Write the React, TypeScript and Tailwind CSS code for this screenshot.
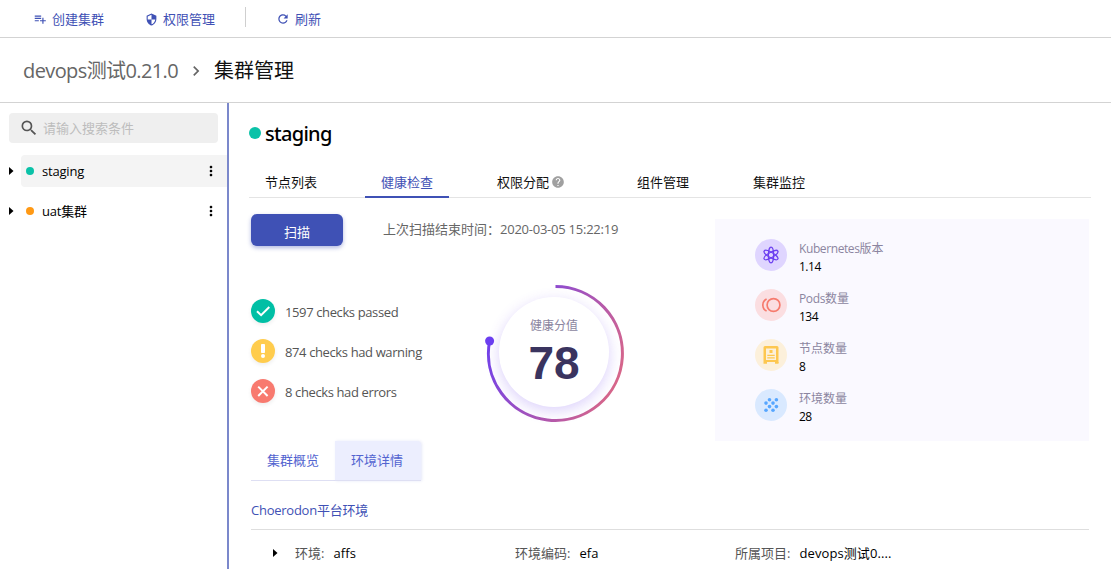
import React from "react";
import {
  MdPlaylistAdd,
  MdSecurity,
  MdRefresh,
  MdSearch,
  MdMoreVert,
  MdHelp,
  MdNavigateNext,
} from "react-icons/md";

function Caret() {
  return (
    <svg width="5" height="8" viewBox="0 0 5 8" className="shrink-0 fill-black">
      <path d="M0 0L4.5 4L0 8Z" />
    </svg>
  );
}

function Toolbar() {
  return (
    <div className="flex h-[38px] items-center border-b border-[#d3d3d3] pt-px text-[#3f51b5]">
      <button className="ml-[33px] flex w-[71px] items-center gap-1.5">
        <MdPlaylistAdd size={14} className="-mr-px shrink-0" />
        <span className="whitespace-nowrap leading-5">创建集群</span>
      </button>
      <button className="ml-10 flex w-[71px] items-center gap-[5px]">
        <MdSecurity size={13} className="ml-px shrink-0" />
        <span className="whitespace-nowrap leading-5">权限管理</span>
      </button>
      <div className="mb-1 ml-[30px] h-5 w-px bg-[#cfcfcf]" />
      <button className="ml-[30px] flex items-center gap-[5px]">
        <MdRefresh size={14} className="shrink-0" />
        <span className="whitespace-nowrap leading-5">刷新</span>
      </button>
    </div>
  );
}

function Breadcrumb() {
  return (
    <div className="flex h-[65px] items-center border-b border-[#d3d3d3] pl-[23px] pt-px text-[20px]">
      <span className="w-[155px] whitespace-nowrap tracking-[-0.6px] text-[#666]">devops测试0.21.0</span>
      <MdNavigateNext size={20} className="mx-2 text-[#666]" />
      <span className="text-[#111]">集群管理</span>
    </div>
  );
}

function TreeRow({ name, dot, active }: { name: string; dot: string; active?: boolean }) {
  return (
    <div className="flex h-8 items-center pl-[9px]">
      <Caret />
      <div className={`ml-[7px] flex h-8 flex-1 items-center pl-[5px] ${active ? "rounded-l-sm bg-[#f4f4f4]" : ""}`}>
        <span className={`size-2 rounded-full ${dot}`} />
        <span className="ml-2 flex-1 tracking-[-0.2px] text-black">{name}</span>
        <MdMoreVert size={16} className="mr-2 text-black" />
      </div>
    </div>
  );
}

function Sidebar() {
  return (
    <aside className="w-[229px] shrink-0 border-r-2 border-[#7b88cb] pt-2.5">
      <div className="ml-[9px] flex h-[30px] w-[209px] items-center rounded-sm bg-[#efefef] pl-[10px] text-[#bdbdbd]">
        <MdSearch size={20} className="mr-1 text-[#555]" />
        <span>请输入搜索条件</span>
      </div>
      <div className="mt-3 flex flex-col gap-2">
        <TreeRow name="staging" dot="bg-[#0bc2a8]" active />
        <TreeRow name="uat集群" dot="bg-[#ff9915]" />
      </div>
    </aside>
  );
}

function Tabs() {
  const base = "flex h-8 items-center px-4 whitespace-nowrap";
  return (
    <div className="mr-5 flex h-[32px] gap-8 border-b border-[#e4e4e4] text-[#111]">
      <div className={base}>节点列表</div>
      <div className="flex h-8 items-center whitespace-nowrap border-b-2 border-[#3f51b5] px-4 pt-0.5 text-[#3f51b5]">健康检查</div>
      <div className="flex h-8 w-[108px] items-center gap-[3px] whitespace-nowrap pl-4">
        权限分配
        <MdHelp size={14} className="-ml-px text-[#a0a0a0]" />
      </div>
      <div className={base}>组件管理</div>
      <div className={base}>集群监控</div>
    </div>
  );
}

function CheckRow({ color, icon, text }: { color: string; icon: React.ReactNode; text: string }) {
  return (
    <div className="flex h-6 items-center gap-2.5">
      <span className={`flex size-6 items-center justify-center rounded-full text-white shadow-[0_2px_4px_rgba(0,0,0,0.07)] ${color}`}>
        {icon}
      </span>
      <span className="whitespace-nowrap pt-0.5 tracking-[-0.38px] text-[#555]">{text}</span>
    </div>
  );
}

function ScoreDial() {
  return (
    <div className="grid h-[144px] w-[144px] place-items-center">
      <svg className="col-start-1 row-start-1" width="144" height="144" viewBox="0 0 144 144" fill="none">
        <defs>
          <linearGradient id="ring" x1="5" y1="45" x2="139" y2="105" gradientUnits="userSpaceOnUse">
            <stop offset="0" stopColor="#6c3ff0" />
            <stop offset="1" stopColor="#dc6885" />
          </linearGradient>
        </defs>
        <path d="M72.5 5.5A67 67 0 1 1 6.5 60.5" stroke="url(#ring)" strokeWidth="3" />
        <circle cx="6.6" cy="60" r="4.5" fill="#6c3ff0" />
      </svg>
      <div className="col-start-1 row-start-1 -mt-0.5 mr-0.5 flex size-[110px] flex-col items-center rounded-full bg-white pt-[19px] shadow-[0_4px_14px_rgba(108,63,240,0.24)]">
        <span className="text-xs leading-5 text-[#8b85a0]">健康分值</span>
        <span className="mt-[3px] font-['Liberation_Sans',sans-serif] text-[46px] font-bold leading-[48px] text-[#3a345f]">78</span>
      </div>
    </div>
  );
}

function KubernetesIcon() {
  return (
    <svg width="18" height="18" viewBox="0 0 18 18" fill="none" stroke="#6c3ff0" strokeWidth="1.3">
      <ellipse cx="9" cy="9" rx="2.6" ry="7.9" />
      <ellipse cx="9" cy="9" rx="2.6" ry="7.9" transform="rotate(60 9 9)" />
      <ellipse cx="9" cy="9" rx="2.6" ry="7.9" transform="rotate(120 9 9)" />
    </svg>
  );
}

function PodsIcon() {
  return (
    <svg width="20" height="16" viewBox="0 0 20 16" fill="none" stroke="#f67b6e" strokeWidth="1.7">
      <circle cx="12.5" cy="8" r="6.4" />
      <path d="M5.6 1.9A6.8 6.8 0 0 0 5.6 14.1" />
    </svg>
  );
}

function NodeIcon() {
  return (
    <svg width="16" height="18" viewBox="0 0 16 18" fill="#fdc750">
      <path fillRule="evenodd" d="M2 0H14Q15.5 0 15.5 1.5V17H12V16H4V17.8H.5V1.5Q.5 0 2 0ZM3 2.5V14H13V2.5Z" />
      <path d="M12 16h3.5v1.8H12zM6.5 4h3v3h-3zM4.3 8.8h7.4V10H4.3zM4.3 11.3h7.4v1.3H4.3z" />
    </svg>
  );
}

function EnvIcon() {
  return (
    <svg width="16" height="16" viewBox="0 0 16 16" fill="#57a6ff">
      <circle cx="6.5" cy="2.7" r="1.8" />
      <circle cx="13.4" cy="2.7" r="1.8" />
      <circle cx="3" cy="6.1" r="1.8" />
      <circle cx="10" cy="6.1" r="1.8" />
      <circle cx="6.5" cy="9.6" r="1.8" />
      <circle cx="13.4" cy="9.6" r="1.8" />
      <circle cx="3" cy="13.2" r="1.8" />
      <circle cx="10" cy="13.2" r="1.8" />
    </svg>
  );
}

function Stat({ bg, icon, label, value }: { bg: string; icon: React.ReactNode; label: React.ReactNode; value: string }) {
  return (
    <div className="flex h-8 items-center gap-3 text-xs">
      <span className={`flex size-8 items-center justify-center rounded-full ${bg}`}>{icon}</span>
      <div className="flex flex-col pt-1.5">
        <span className="whitespace-nowrap leading-[18px] text-[#8b85a0]">{label}</span>
        <span className="leading-[18px] tracking-[-0.5px] text-black">{value}</span>
      </div>
    </div>
  );
}

function Overview() {
  return (
    <div className="flex h-[243px]">
      <div className="w-[466px] shrink-0 pl-0.5 pt-4">
        <div className="flex h-8 items-center">
          <button className="flex h-8 w-[92px] items-center justify-center rounded-md bg-[#3f51b5] pt-1 text-white shadow-[0_2px_4px_rgba(63,81,181,0.4)]">
            扫描
          </button>
          <span className="ml-[40px] whitespace-nowrap pb-0.5 text-[#666]">
            上次扫描结束时间：<span className="tracking-[-0.24px]">2020-03-05 15:22:19</span>
          </span>
        </div>
        <div className="flex">
          <div className="flex w-[232px] shrink-0 flex-col gap-4 pt-[53px]">
            <CheckRow
              color="bg-[#00bfa5]"
              icon={
                <svg width="24" height="24" viewBox="0 0 24 24" fill="none" stroke="#fff" strokeWidth="2">
                  <path d="M6 12.3L10.1 16.2L18.3 8" />
                </svg>
              }
              text="1597 checks passed"
            />
            <CheckRow
              color="bg-[#ffcc4d]"
              icon={
                <svg width="4" height="14" viewBox="0 0 4 14" fill="#fff">
                  <rect width="4" height="9" rx="0.8" />
                  <circle cx="2" cy="12" r="2" />
                </svg>
              }
              text="874 checks had warning"
            />
            <CheckRow
              color="bg-[#f87a6f]"
              icon={
                <svg width="24" height="24" viewBox="0 0 24 24" fill="none" stroke="#fff" strokeWidth="2">
                  <path d="M7.2 7.6L16.6 17M16.6 7.6L7.2 17" />
                </svg>
              }
              text="8 checks had errors"
            />
          </div>
          <div className="pt-[35px]">
            <ScoreDial />
          </div>
        </div>
      </div>
      <div className="mt-[21px] flex h-[222px] w-[374px] flex-col gap-[18px] bg-[#faf9ff] pl-10 pt-5">
        <Stat
          bg="bg-[#dfd5ff]"
          icon={<KubernetesIcon />}
          label={
            <>
              <span className="tracking-[-0.4px]">Kubernetes</span>版本
            </>
          }
          value="1.14"
        />
        <Stat
          bg="bg-[#fbdee1]"
          icon={<PodsIcon />}
          label={
            <>
              <span className="tracking-[-0.35px]">Pods</span>数量
            </>
          }
          value="134"
        />
        <Stat bg="bg-[#fcf0db]" icon={<NodeIcon />} label="节点数量" value="8" />
        <Stat bg="bg-[#d9e9ff]" icon={<EnvIcon />} label="环境数量" value="28" />
      </div>
    </div>
  );
}

function Field({ label, value, width }: { label: string; value: string; width: string }) {
  return (
    <div className={`flex shrink-0 gap-[9px] whitespace-nowrap ${width}`}>
      <span className="text-[#555]">{label}:</span>
      <span className="tracking-[0.1px] text-black">{value}</span>
    </div>
  );
}

export default function App() {
  return (
    <div className="flex h-[569px] w-[1111px] flex-col overflow-hidden bg-white font-['Open_Sans','Noto_Sans_CJK_SC',sans-serif] text-[13px] leading-5">
      <Toolbar />
      <Breadcrumb />
      <div className="flex min-h-0 flex-1">
        <Sidebar />
        <main className="min-w-0 flex-1 pl-5">
          <div className="flex h-[63px] items-center gap-1">
            <span className="mb-1 size-3 rounded-full bg-[#0bc2a8]" />
            <h1 className="pb-0.5 font-['Noto_Sans',sans-serif] text-[20px] font-medium tracking-[-0.7px] text-black">staging</h1>
          </div>
          <Tabs />
          <Overview />
          <div className="ml-0.5 flex h-10 w-[171px] text-[#5364d0]">
            <div className="flex w-[84px] items-center justify-center border-b border-[#dedff3] pb-px">集群概览</div>
            <div className="flex w-[86px] items-center rounded-tr-sm border-b border-[#dedff3] bg-[#eceefe] pb-px pl-4 shadow-[1px_0_3px_rgba(83,100,208,0.15)]">环境详情</div>
          </div>
          <div className="ml-0.5 mr-[22px] flex h-[49px] items-center border-b border-[#dedede] pt-2.5 text-[#3f51b5]">
            <span className="tracking-[-0.25px]">Choerodon平台环境</span>
          </div>
          <div className="flex h-[46px] items-center pl-6">
            <Caret />
            <div className="ml-[17px] flex">
              <Field label="环境" value="affs" width="w-[220px]" />
              <Field label="环境编码" value="efa" width="w-[220px]" />
              <Field label="所属项目" value="devops测试0...." width="w-[170px]" />
            </div>
          </div>
        </main>
      </div>
    </div>
  );
}
